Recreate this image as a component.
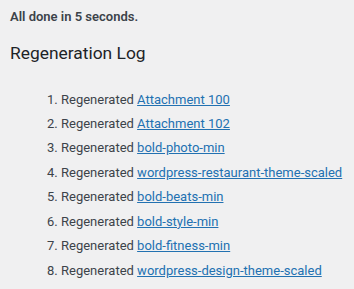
const items = [
  "Attachment 100",
  "Attachment 102",
  "bold-photo-min",
  "wordpress-restaurant-theme-scaled",
  "bold-beats-min",
  "bold-style-min",
  "bold-fitness-min",
  "wordpress-design-theme-scaled",
];

export default function App() {
  return (
    <div className="h-[289px] w-[354px] bg-[#f0f0f1] pl-[10px] pt-[8px] font-['Roboto',sans-serif] text-[13px] leading-[18px] text-[#3c434a]">
      <p className="font-semibold">All done in 5 seconds.</p>
      <h2 className="mt-[16px] text-[17.4px] font-normal leading-[22px] text-[#1d2327]">Regeneration Log</h2>
      <ol className="ml-[51px] mt-[26.5px] list-decimal">
        {items.map((name) => (
          <li key={name} className="mb-[6px] whitespace-nowrap leading-[18.45px]">
            Regenerated{" "}
            <a href="#" className="text-[#2271b1] underline">
              {name}
            </a>
          </li>
        ))}
      </ol>
    </div>
  );
}
